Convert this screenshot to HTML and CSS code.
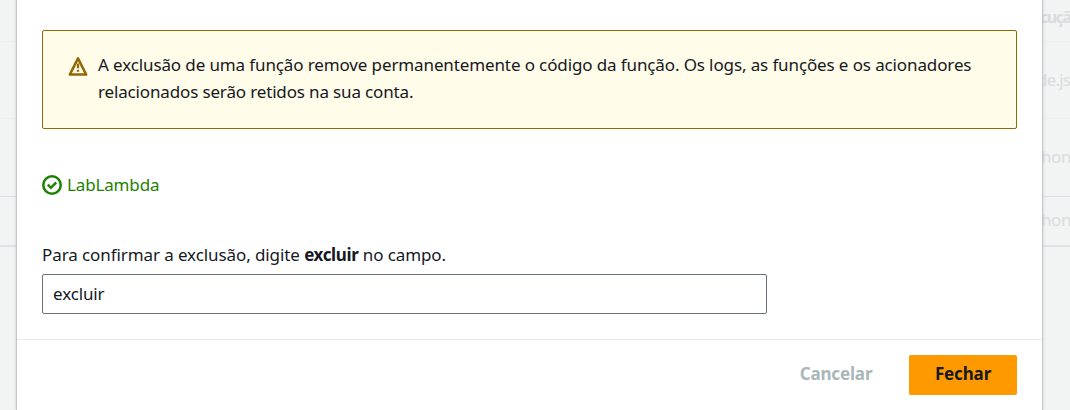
FILE: index.html
```html
<!DOCTYPE html>
<html lang="pt-BR">
<head>
<meta charset="utf-8">
<title>Excluir função</title>
<link rel="stylesheet" href="styles.css">
</head>
<body>
<div class="page">
  <div class="table">
    <div class="row row-head"><span class="cell cell-head">cuçã</span></div>
    <div class="row row-node"><span class="cell cell-node">de.js</span></div>
    <div class="row row-python"><span class="cell">hon</span></div>
    <div class="row row-last"><span class="cell">hon</span></div>
  </div>
  <section class="modal" role="dialog">
    <div class="content">
      <div class="alert">
        <svg class="alert-icon" viewBox="0 0 20 20" fill="none" stroke="#906806" stroke-width="2.5"><path d="M10 2.4 18.2 18.6H1.8Z" stroke-linejoin="round"/><path d="M10 7.4v4.8M10 13.7v2.1" stroke-width="2.3"/></svg>
        <p class="alert-text"><span class="line line-one">A exclusão de uma função remove permanentemente o código da função. Os logs, as funções e os acionadores</span> <span class="line line-two">relacionados serão retidos na sua conta.</span></p>
      </div>
      <div class="status">
        <svg class="status-icon" viewBox="0 0 20 20" fill="none" stroke="#1d8102" stroke-width="2.5"><circle cx="10" cy="10" r="8.75"/><path d="m5.8 9.7 3.1 3.1 5.3-5.3"/></svg>
        <span class="status-name">LabLambda</span>
      </div>
      <label class="label" for="confirm">Para confirmar a exclusão, digite <b class="keyword">excluir</b> no campo.</label>
      <input class="input" id="confirm" type="text" value="excluir">
    </div>
    <footer class="footer">
      <button class="button cancel">Cancelar</button>
      <button class="button primary">Fechar</button>
    </footer>
  </section>
</div>
</body>
</html>
```
FILE: styles.css
```css
* { box-sizing: border-box; }
body { margin: 0; font-family: "Noto Sans", sans-serif; font-size: 17px; color: #16191f; }
.page { position: relative; width: 1070px; height: 410px; overflow: hidden; background: #f2f3f3; }
.table { display: flex; flex-direction: column; color: #d9dcde; }
.row { display: flex; padding-left: 1041px; border-bottom: 1px solid #eceeee; line-height: 24px; letter-spacing: -.4px; }
.row-head { height: 42px; padding-top: 5px; }
.row-node { height: 77px; padding-top: 26px; }
.row-python { height: 78px; padding-top: 26px; border-color: #d5e2ea; }
.row-last { height: 50px; padding-top: 11px; border-bottom: 2px solid #dce3e7; }
.cell-head { margin-left: -1px; font-size: 16px; font-weight: 700; letter-spacing: -1.5px; }
.cell-node { margin-left: -4px; letter-spacing: -.8px; }
.modal { position: absolute; top: 0; left: 17px; width: 1025px; height: 410px; background: #fff; box-shadow: 0 0 0 1px #c3c8cc, 0 0 3px 1px rgba(0, 28, 36, .15); }
.content { height: 339px; padding: 30px 25px 0; }
.alert { display: flex; gap: 10px; height: 99px; padding: 20px 25px; border: 1px solid #906806; border-radius: 2px; background: #fffce9; }
.alert-icon { width: 20px; height: 20px; margin-top: 5px; }
.alert-text { margin: 0; line-height: 27px; white-space: nowrap; }
.line { display: block; }
.line-one { letter-spacing: -.12px; }
.line-two { letter-spacing: -.15px; }
.status { display: flex; align-items: center; gap: 5px; height: 28px; margin-top: 42px; color: #1d8102; }
.status-icon { width: 20px; height: 20px; }
.status-name { padding-bottom: 2px; letter-spacing: -.15px; }
.label { display: block; height: 28px; margin-top: 42px; line-height: 28px; letter-spacing: -.09px; white-space: nowrap; }
.keyword { letter-spacing: -.38px; }
.input { display: block; width: 725px; height: 40px; margin-top: 5px; padding: 0 10px 2px; border: 1px solid #687078; border-radius: 2px; background: #fff; color: #16191f; font: inherit; letter-spacing: -.12px; }
.footer { display: flex; justify-content: flex-end; height: 71px; padding: 15px 25px; border-top: 1px solid #eaeded; }
.button { height: 40px; padding: 0 0 3px; border: 0; border-radius: 2px; background: none; font: 700 17px "Noto Sans", sans-serif; letter-spacing: -.15px; }
.cancel { width: 146px; color: #aab7b8; }
.primary { width: 108px; background: #f90; color: #16191f; }
```
